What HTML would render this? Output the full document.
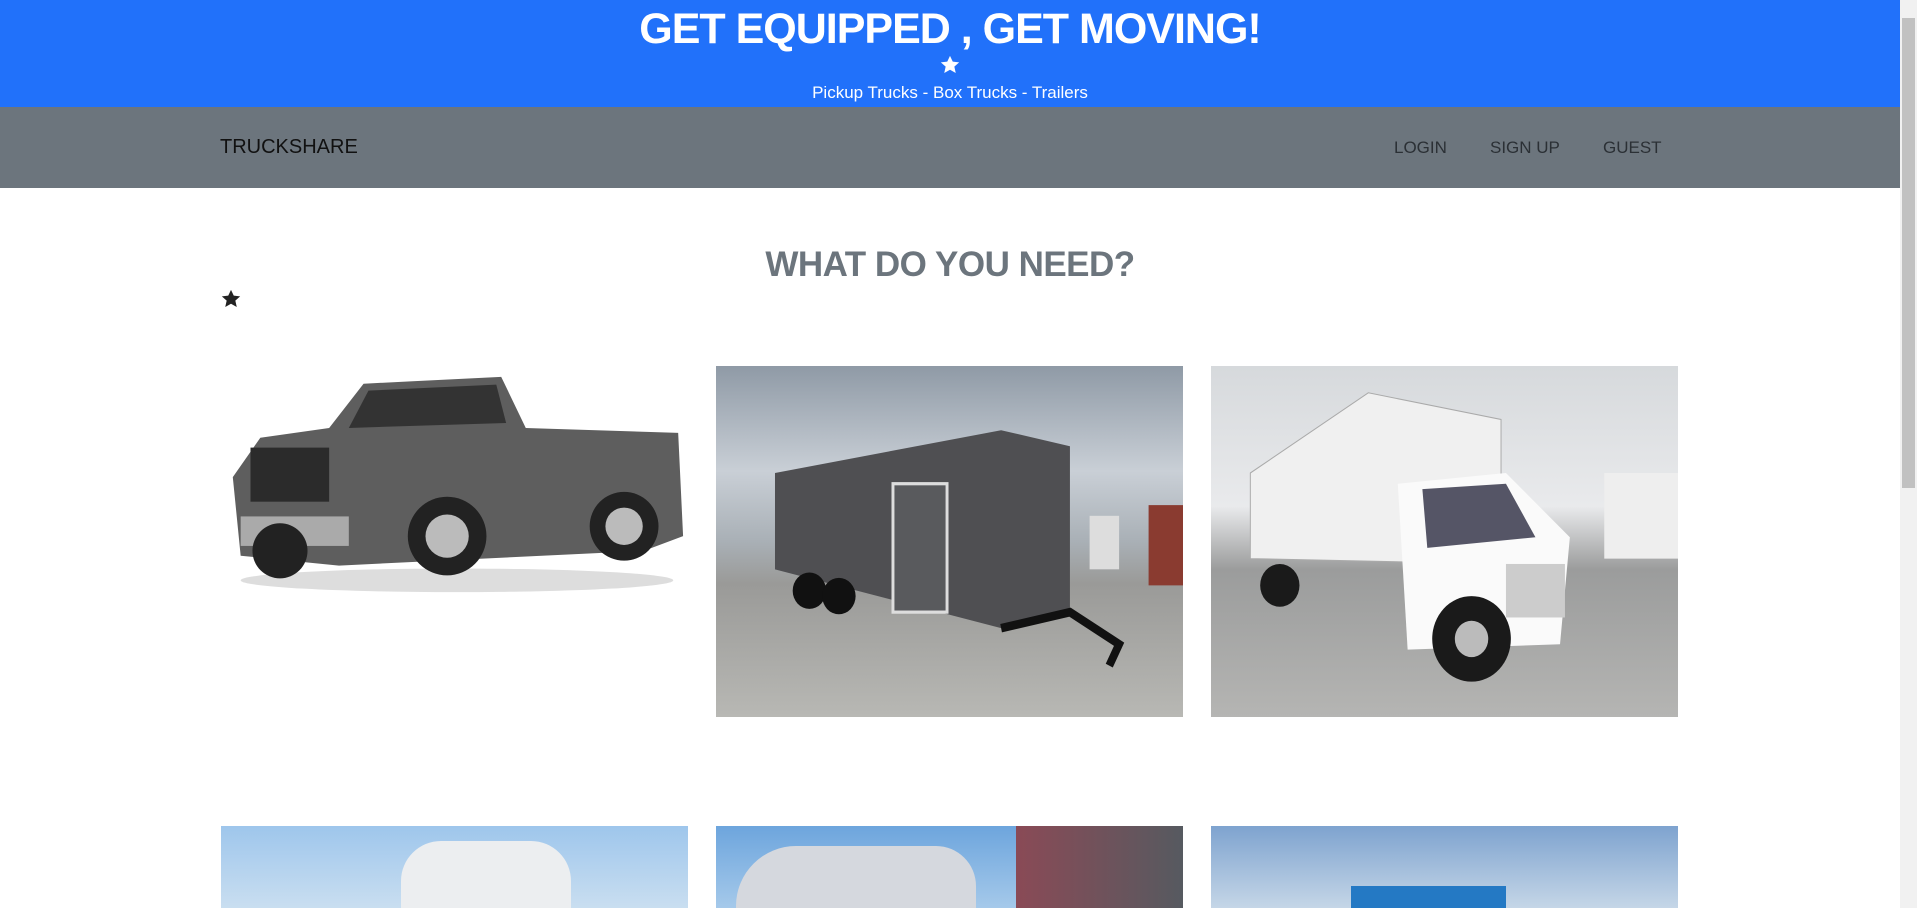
<!DOCTYPE html>
<html><head><meta charset="utf-8"><style>
*{margin:0;padding:0;box-sizing:border-box}
body{width:1917px;height:908px;overflow:hidden;background:#fff;font-family:"Liberation Sans",sans-serif;position:relative}
.hdr{position:absolute;left:0;top:0;width:1900px;height:107px;background:#2171fa;color:#fff;text-align:center}
.hdr h1{position:absolute;left:0;right:0;top:5px;font-size:43px;font-weight:bold;letter-spacing:-1px}
.hdr .st{position:absolute;left:940px;top:55px}
.hdr p{position:absolute;left:0;right:0;top:83px;font-size:17px}
.nav{position:absolute;left:0;top:107px;width:1900px;height:81px;background:#6c757d}
.nav .b{position:absolute;left:220px;top:29px;font-size:20px;color:#111}
.nav a{position:absolute;top:31px;font-size:17px;color:#2b3035}
h2{position:absolute;left:0;width:1900px;text-align:center;top:245px;font-size:35px;color:#6c757d;font-weight:bold;letter-spacing:-0.5px}
.img{position:absolute;width:467px;overflow:hidden}
.sb{position:absolute;right:0;top:0;width:17px;height:908px;background:#f1f1f1}
.sb div{position:absolute;left:2px;top:18px;width:13px;height:470px;background:#c1c1c1}
</style></head><body>
<div class="hdr"><h1>GET EQUIPPED , GET MOVING!</h1>
<svg class="st" width="20" height="20" viewBox="0 0 24 24"><path d="M12 1l3.3 7 7.7.8-5.8 5.2 1.7 7.6L12 17.7 5.1 21.6l1.7-7.6L1 8.8 8.7 8z" fill="#fff"/></svg>
<p>Pickup Trucks - Box Trucks - Trailers</p></div>
<div class="nav"><span class="b">TRUCKSHARE</span><a style="left:1394px">LOGIN</a><a style="left:1490px">SIGN UP</a><a style="left:1603px">GUEST</a></div>
<h2>WHAT DO YOU NEED?</h2>
<svg style="position:absolute;left:221px;top:289px" width="20" height="20" viewBox="0 0 24 24"><path d="M12 1l3.3 7 7.7.8-5.8 5.2 1.7 7.6L12 17.7 5.1 21.6l1.7-7.6L1 8.8 8.7 8z" fill="#222"/></svg>

<div class="img" style="left:221px;top:366px;height:234px;background:#fff">
<svg width="467" height="234" viewBox="0 0 475 232"><ellipse cx="240" cy="215" rx="220" ry="12" fill="#ddd"/>
<path d="M12 110 L40 70 L110 60 L145 15 L285 8 L310 60 L465 65 L470 170 L430 185 L120 200 L20 190 Z" fill="#5e5e5e"/>
<path d="M150 22 L280 16 L290 55 L130 60 Z" fill="#333"/>
<rect x="30" y="80" width="80" height="55" fill="#2b2b2b"/>
<rect x="20" y="150" width="110" height="30" fill="#aaa"/>
<circle cx="230" cy="170" r="40" fill="#222"/><circle cx="230" cy="170" r="22" fill="#bbb"/>
<circle cx="410" cy="160" r="35" fill="#222"/><circle cx="410" cy="160" r="19" fill="#bbb"/>
<circle cx="60" cy="185" r="28" fill="#222"/></svg></div>

<div class="img" style="left:716px;top:366px;height:351px;background:linear-gradient(#8f9aa6 0%,#c9cfd6 30%,#a9b0b6 50%,#9a9a98 62%,#b8b8b4 100%)">
<svg width="467" height="351" viewBox="0 0 475 328" preserveAspectRatio="none"><path d="M60 100 L290 60 L360 75 L360 230 L290 245 L60 190 Z" fill="#4f4f52"/>
<rect x="180" y="110" width="55" height="120" fill="#595a5d" stroke="#ddd" stroke-width="3"/>
<path d="M290 245 L360 230 L410 260 L400 280" stroke="#111" stroke-width="8" fill="none"/>
<circle cx="95" cy="210" r="17" fill="#111"/><circle cx="125" cy="215" r="17" fill="#111"/>
<rect x="380" y="140" width="30" height="50" fill="#ddd"/><rect x="440" y="130" width="35" height="75" fill="#8a3b30"/></svg></div>

<div class="img" style="left:1211px;top:366px;height:351px;background:linear-gradient(#d6d9dc 0%,#e9eaec 40%,#9b9c9c 58%,#b5b5b3 100%)">
<svg width="467" height="351" viewBox="0 0 475 328" preserveAspectRatio="none"><path d="M40 100 L160 25 L295 50 L295 185 L40 180 Z" fill="#f0f0f0" stroke="#aaa"/>
<path d="M190 110 L300 100 L365 160 L355 260 L200 265 Z" fill="#fafafa"/>
<path d="M215 115 L300 110 L330 160 L220 170 Z" fill="#556"/>
<rect x="300" y="185" width="60" height="50" fill="#ccc"/>
<circle cx="265" cy="255" r="40" fill="#1a1a1a"/><circle cx="265" cy="255" r="17" fill="#bbb"/>
<circle cx="70" cy="205" r="20" fill="#1a1a1a"/>
<rect x="400" y="100" width="75" height="80" fill="#eee"/></svg></div>

<div class="img" style="left:221px;top:826px;height:82px;background:linear-gradient(#9ec6ec,#c9def0)">
<div style="position:absolute;left:180px;top:15px;width:170px;height:110px;background:#eceef0;border-radius:40px 40px 0 0"></div></div>
<div class="img" style="left:716px;top:826px;height:82px;background:linear-gradient(#6da5dd,#a5c9ea)">
<div style="position:absolute;left:20px;top:20px;width:240px;height:100px;background:#d5d8de;border-radius:60px 40px 0 0"></div>
<div style="position:absolute;left:300px;top:0;width:170px;height:112px;background:linear-gradient(90deg,#8a4a56,#555a60)"></div></div>
<div class="img" style="left:1211px;top:826px;height:82px;background:linear-gradient(#7ea3cf,#c5d6e7)">
<div style="position:absolute;left:140px;top:60px;width:155px;height:60px;background:#2479c4"></div></div>

<div class="sb"><div></div></div>
</body></html>
